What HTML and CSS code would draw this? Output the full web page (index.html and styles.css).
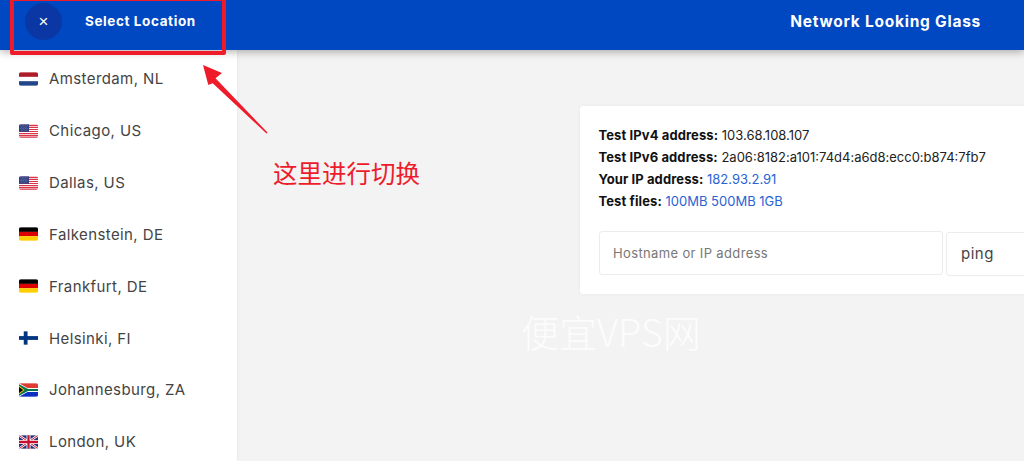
FILE: index.html
```html
<!DOCTYPE html>
<html lang="en">
<head>
    <meta charset="UTF-8">
    <meta name="viewport" content="width=device-width, initial-scale=1.0">
    <title>Network Looking Glass</title>
    <link rel="stylesheet" href="styles.css">
</head>
<body>
    <header class="topbar">
        <div class="topbar-left">
            <button class="close-btn" type="button">×</button>
            <span class="select-title">Select Location</span>
        </div>
        <div class="site-title">Network Looking Glass</div>
    </header>

    <div class="page">
        <aside class="sidebar">
            <a class="location" href="#">
                <svg class="flag" viewBox="0 0 20 14"><rect width="20" height="14.01" fill="#fff"/><rect width="20" height="4.7" fill="#ae1c28"/><rect y="9.3" width="20" height="4.7" fill="#21468b"/></svg>
                <span>Amsterdam, NL</span>
            </a>
            <a class="location" href="#">
                <svg class="flag" viewBox="0 0 20 14"><use href="#flag-us"/></svg>
                <span>Chicago, US</span>
            </a>
            <a class="location" href="#">
                <svg class="flag" viewBox="0 0 20 14"><use href="#flag-us"/></svg>
                <span>Dallas, US</span>
            </a>
            <a class="location" href="#">
                <svg class="flag" viewBox="0 0 20 14"><use href="#flag-de"/></svg>
                <span>Falkenstein, DE</span>
            </a>
            <a class="location" href="#">
                <svg class="flag" viewBox="0 0 20 14"><use href="#flag-de"/></svg>
                <span>Frankfurt, DE</span>
            </a>
            <a class="location" href="#">
                <svg class="flag" viewBox="0 0 20 14"><rect width="20" height="14" fill="#fff"/><rect x="5" width="4" height="14" fill="#003580"/><rect y="5" width="20" height="4" fill="#003580"/></svg>
                <span>Helsinki, FI</span>
            </a>
            <a class="location" href="#">
                <svg class="flag" viewBox="0 0 20 14"><rect width="20" height="7" fill="#e03c31"/><rect y="7" width="20" height="7" fill="#0b2fc0"/><path d="M0 0 L9 5 H20 V9 H9 L0 14 Z" fill="#fff"/><path d="M0 1 L9.5 6 H20 V8 H9.5 L0 13 Z" fill="#007749"/><path d="M0 2.5 L6 7 L0 11.5 Z" fill="#ffb81c"/><path d="M0 3.8 L4.4 7 L0 10.2 Z" fill="#000"/></svg>
                <span>Johannesburg, ZA</span>
            </a>
            <a class="location" href="#">
                <svg class="flag" viewBox="0 0 20 14"><rect width="20" height="14" fill="#24337a"/><path d="M0 0 L20 14 M20 0 L0 14" stroke="#fff" stroke-width="2.6"/><path d="M0 0 L20 14 M20 0 L0 14" stroke="#c8102e" stroke-width="1"/><path d="M10 0 V14 M0 7 H20" stroke="#fff" stroke-width="4.2"/><path d="M10 0 V14 M0 7 H20" stroke="#c8102e" stroke-width="2.4"/></svg>
                <span>London, UK</span>
            </a>
        </aside>

        <main class="content">
            <section class="card">
                <p class="info"><b>Test IPv4 address:</b> 103.68.108.107</p>
                <p class="info"><b>Test IPv6 address:</b> 2a06:8182:a101:74d4:a6d8:ecc0:b874:7fb7</p>
                <p class="info"><b>Your IP address:</b> <a href="#">182.93.2.91</a></p>
                <p class="info"><b>Test files:</b> <a href="#">100MB</a> <a href="#">500MB</a> <a href="#">1GB</a></p>
                <form class="lookup">
                    <input class="host-input" type="text" placeholder="Hostname or IP address">
                    <div class="method-select">ping</div>
                </form>
            </section>
        </main>
    </div>

    <!-- annotation drawn over the screenshot -->
    <div class="mark-box"></div>
    <svg class="mark-arrow" width="80" height="80" viewBox="0 0 80 80">
        <path d="M3 1 L22 9 L15.5 14.3 L67.5 68.5 L66.5 69.5 L12.7 19.3 L8.3 21 Z" fill="#ee1c2b"/>
    </svg>
    <div class="mark-text">这里进行切换</div>
    <div class="watermark">便宜VPS网</div>

    <svg width="0" height="0" class="defs">
        <defs>
            <g id="flag-us">
                <rect width="20" height="14" fill="#fff"/>
                <path d="M0 1.1H20M0 3.2H20M0 5.4H20M0 7.5H20M0 9.7H20M0 11.8H20M0 13.6H20" stroke="#d9364a" stroke-width="1.2"/>
                <rect width="10.5" height="7.8" fill="#2f3f82"/>
                <path d="M1 1.5H9M2 3H9M1 4.5H9M2 6H9" stroke="#8f98c0" stroke-width=".7" stroke-dasharray=".8 1"/>
            </g>
            <g id="flag-de">
                <rect width="20" height="4.8" fill="#000"/>
                <rect y="4.7" width="20" height="4.7" fill="#d00"/>
                <rect y="9.3" width="20" height="4.7" fill="#ffce00"/>
            </g>
        </defs>
    </svg>
</body>
</html>
```

FILE: styles.css
```css
* {
    box-sizing: border-box;
}

html, body {
    height: 100%;
}

body {
    margin: 0;
    overflow: hidden;
    background: #f3f3f3;
    color: #444;
    font-family: Inter, "Open Sans", sans-serif;
}

a {
    color: #2a63d4;
    text-decoration: none;
}

.topbar {
    position: relative;
    z-index: 2;
    display: flex;
    justify-content: space-between;
    align-items: center;
    height: 50px;
    padding-right: 43px;
    background: #0047c2;
    box-shadow: 0 2px 8px rgba(0, 0, 0, 0.3);
    color: #fff;
    font-weight: 700;
}

.topbar-left {
    display: flex;
    align-items: center;
    gap: 23px;
    padding: 0 0 8px 25px;
}

.close-btn {
    width: 37px;
    height: 37px;
    padding: 0;
    border: none;
    border-radius: 50%;
    background: #0a37a3;
    color: #fff;
    font-size: 17px;
    line-height: 35px;
}

.select-title {
    font-size: 13.5px;
    letter-spacing: 0.6px;
}

.site-title {
    padding-bottom: 8px;
    font-size: 15.5px;
    letter-spacing: 0.75px;
}

.page {
    display: flex;
    height: 411px;
}

.sidebar {
    flex: none;
    width: 237px;
    padding-top: 3px;
    overflow: hidden;
    background: #fff;
    box-shadow: 0 0 3px rgba(0, 0, 0, 0.08);
}

.location {
    display: flex;
    align-items: center;
    gap: 11px;
    height: 51.85px;
    padding-left: 19px;
    color: #444;
    font-size: 15px;
    letter-spacing: 0.4px;
}

.flag {
    flex: none;
    width: 19px;
    height: 14px;
    border-radius: 2px;
}

.content {
    flex: 1;
    min-width: 0;
    padding: 56px 0 0 343px;
    overflow: hidden;
}

.card {
    width: 620px;
    height: 188px;
    padding: 18px 19px;
    background: #fff;
    border-radius: 3px;
    box-shadow: 0 0 3px rgba(0, 0, 0, 0.06);
}

.info {
    margin: 0 0 0 -0.5px;
    color: #222;
    font-size: 13px;
    line-height: 22px;
}

.info b {
    color: #111;
    letter-spacing: 0.1px;
}

.lookup {
    display: flex;
    gap: 3px;
    margin-top: 19px;
}

.host-input {
    width: 344px;
    height: 44px;
    padding: 0 13px;
    border: 1px solid #ececec;
    border-radius: 3px;
    background: #fff;
    color: #444;
    font-family: inherit;
    font-size: 13px;
    letter-spacing: 0.36px;
}

.host-input::placeholder {
    color: #777;
}

.method-select {
    width: 200px;
    height: 44px;
    margin-top: 1px;
    padding: 0 14px;
    border: 1px solid #ececec;
    border-radius: 3px;
    color: #444;
    font-size: 15px;
    letter-spacing: 0.5px;
    line-height: 42px;
}

.mark-box {
    position: absolute;
    z-index: 3;
    top: -3px;
    left: 10px;
    width: 216px;
    height: 58px;
    border: 4px solid #ee1c2b;
    border-radius: 2px;
}

.mark-arrow {
    position: absolute;
    z-index: 3;
    top: 64px;
    left: 200px;
}

.mark-text {
    position: absolute;
    top: 155px;
    left: 273px;
    color: #ee1c2b;
    font-family: "Noto Sans CJK SC", sans-serif;
    font-size: 24.5px;
    line-height: 36px;
}

.watermark {
    position: absolute;
    top: 304px;
    left: 521px;
    color: rgba(255, 255, 255, 0.8);
    font-family: "Noto Sans CJK SC", sans-serif;
    font-size: 38px;
    font-weight: 300;
    line-height: 54px;
}

.defs {
    position: absolute;
}
```
